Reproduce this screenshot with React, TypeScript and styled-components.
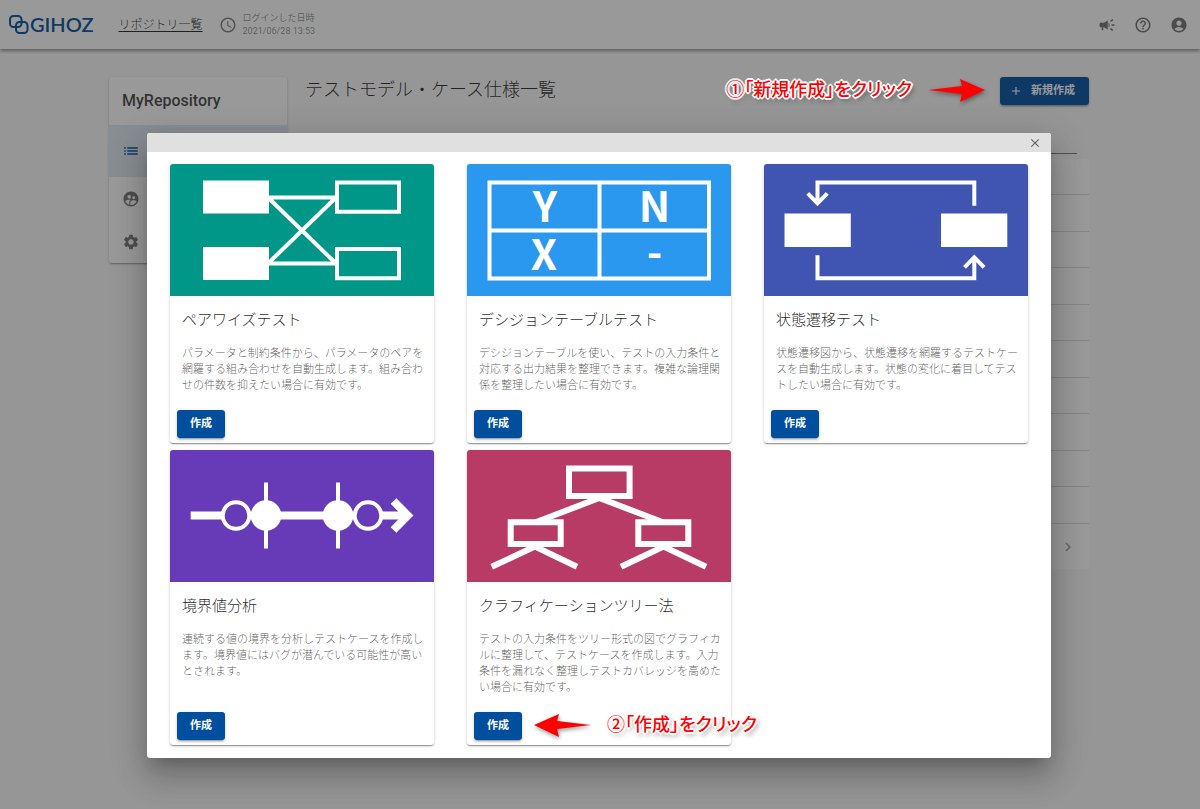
import React from "react";
import styled, { createGlobalStyle, css } from "styled-components";
import {
  MdAccessTime,
  MdAccountCircle,
  MdAdd,
  MdCampaign,
  MdChevronRight,
  MdClose,
  MdHelpOutline,
  MdList,
  MdSettings,
  MdSupervisedUserCircle,
} from "react-icons/md";

const primary = "#004f9f";
const sans = `Roboto, "Noto Sans CJK JP", sans-serif`;

const GlobalStyle = createGlobalStyle`
  *, *::before, *::after { box-sizing: border-box; }
  body { margin: 0; background: #fafafa; font-family: ${sans}; color: rgba(0, 0, 0, 0.87); }
  h1, h2, h3, p, ul { margin: 0; padding: 0; }
  ul { list-style: none; }
  button { font-family: inherit; cursor: pointer; }
`;

const Page = styled.div`
  position: relative;
  min-height: 100vh;
`;

/* ---------- header ---------- */

const Header = styled.header`
  display: flex;
  align-items: center;
  height: 49px;
  padding: 0 12px 0 9px;
  background: #fff;
  box-shadow: 0 2px 3px rgba(0, 0, 0, 0.3), 0 1px 6px rgba(0, 0, 0, 0.2);
`;

const Brand = styled.a`
  display: flex;
  align-items: center;
  gap: 1px;
  padding-bottom: 1px;
  color: ${primary};
  font: 600 20px/24px Lato, sans-serif;
  text-decoration: none;
`;

const RepoLink = styled.a`
  margin-left: 25px;
  color: rgba(0, 0, 0, 0.87);
  font-size: 12px;
  font-weight: 300;
  line-height: 16px;
  text-underline-offset: 2px;
`;

const LoginInfo = styled.div`
  display: flex;
  align-items: center;
  gap: 6px;
  margin-left: 16px;
  color: rgba(0, 0, 0, 0.5);
`;

const LoginText = styled.p`
  display: grid;
  font-size: 9px;
  line-height: 13px;
  color: rgba(0, 0, 0, 0.46);
`;

const HeaderActions = styled.nav`
  display: flex;
  gap: 18px;
  margin-left: auto;
`;

const IconButton = styled.button<{ $faint?: boolean }>`
  display: flex;
  padding: 0;
  border: 0;
  background: none;
  color: ${(p) => (p.$faint ? "rgba(0, 0, 0, 0.36)" : "rgba(0, 0, 0, 0.56)")};
`;

/* ---------- page body ---------- */

const Body = styled.div`
  display: grid;
  grid-template-columns: 178px minmax(0, 1fr);
  align-items: start;
  gap: 18px;
  padding: 28px 111px 0 109px;
`;

const Sidebar = styled.aside`
  overflow: hidden;
  border-radius: 3px;
  background: #fff;
  box-shadow: 0 2px 1px -1px rgba(0, 0, 0, 0.2), 0 1px 3px rgba(0, 0, 0, 0.24);
`;

const RepoName = styled.h2`
  padding: 0 13px;
  color: rgba(0, 0, 0, 0.76);
  font-size: 16px;
  font-weight: 500;
  line-height: 48px;
`;

const SideLink = styled.a<{ $active?: boolean }>`
  display: flex;
  align-items: center;
  height: 43px;
  padding: 0 13px;
  color: rgba(0, 0, 0, 0.54);
  ${(p) =>
    p.$active &&
    css`
      height: 52px;
      background: #dfe9f2;
      color: ${primary};
    `}
`;

const TitleRow = styled.div`
  display: flex;
  align-items: center;
  justify-content: space-between;
  height: 28px;
`;

const PageTitle = styled.h1`
  padding-bottom: 2px;
  font-size: 18px;
  font-weight: 300;
  line-height: 24px;
`;

const Anchor = styled.div`
  position: relative;
`;

const Button = styled.button`
  display: flex;
  align-items: center;
  gap: 8px;
  height: 28px;
  padding: 0 13px;
  border: 0;
  border-radius: 3px;
  background: ${primary};
  color: #fff;
  font-size: 11px;
  font-weight: 700;
  line-height: 16px;
  box-shadow: 0 3px 1px -2px rgba(0, 0, 0, 0.2), 0 2px 2px rgba(0, 0, 0, 0.14), 0 1px 4px rgba(0, 0, 0, 0.12);
`;

const NewButton = styled(Button)`
  padding: 0 14px 0 9px;
`;

const SearchField = styled.input`
  display: block;
  width: calc(100% - 24px);
  height: 25px;
  margin: 24px 12px 5px;
  padding: 0;
  border: 0;
  border-bottom: 1px solid rgba(0, 0, 0, 0.5);
  background: none;
`;

const ListPanel = styled.div`
  border-radius: 3px;
  background: #fff;
`;

const ListRow = styled.li`
  height: 36px;
  border-bottom: 1px solid rgba(0, 0, 0, 0.14);
  &:nth-child(even) {
    height: 37px;
  }
`;

const Pager = styled.div`
  display: flex;
  align-items: center;
  justify-content: flex-end;
  height: 45px;
  padding-right: 12px;
`;

/* ---------- dialog ---------- */

const Overlay = styled.div`
  position: absolute;
  inset: 0;
  z-index: 5;
  padding: 133px 149px 51px 147px;
  background: rgba(33, 33, 33, 0.46);
`;

const Dialog = styled.section`
  border-radius: 3px;
  background: #fff;
  box-shadow: 0 11px 15px -7px rgba(0, 0, 0, 0.2), 0 20px 30px 3px rgba(0, 0, 0, 0.14),
    0 8px 36px 6px rgba(0, 0, 0, 0.12);
`;

const DialogBar = styled.div`
  display: flex;
  align-items: center;
  justify-content: flex-end;
  height: 19px;
  padding-right: 9px;
  border-radius: 3px 3px 0 0;
  background: #e0e0e0;
`;

const CardGrid = styled.div`
  display: grid;
  grid-template-columns: repeat(3, minmax(0, 1fr));
  gap: 7px 33px;
  padding: 12px 23px 13px;
`;

const Card = styled.article`
  display: flex;
  flex-direction: column;
  border-radius: 3px;
  background: #fff;
  box-shadow: 0 2px 1px -1px rgba(0, 0, 0, 0.2), 0 1px 1px rgba(0, 0, 0, 0.14), 0 1px 3px rgba(0, 0, 0, 0.22);
`;

const Art = styled.svg<{ $fill: string }>`
  display: block;
  width: 100%;
  border-radius: 3px 3px 0 0;
  background: ${(p) => p.$fill};
  fill: none;
  stroke: #fff;
  stroke-width: 4px;
`;

const CardTitle = styled.h3`
  padding: 12px 12px 14px;
  font-size: 15px;
  font-weight: 300;
  line-height: 24px;
`;

const CardText = styled.p`
  padding: 0 10px 16px 12px;
  color: rgba(0, 0, 0, 0.66);
  font-size: 11px;
  font-weight: 300;
  line-height: 16px;
`;

const CardActions = styled.div`
  display: flex;
  margin-top: auto;
  padding: 0 7px 5px;
`;

/* ---------- callouts ---------- */

const Callout = styled.div<{ $side: "before" | "after" }>`
  position: absolute;
  top: 0;
  z-index: 10;
  display: flex;
  align-items: center;
  gap: 16px;
  height: 26px;
  white-space: nowrap;
  ${(p) => (p.$side === "before" ? "right: calc(100% + 15px);" : "left: calc(100% + 12px);")}
`;

const CalloutText = styled.span`
  padding-bottom: 4px;
  color: #f00;
  font-family: "Noto Sans CJK JP", sans-serif;
  font-size: 18px;
  font-weight: 500;
  font-feature-settings: "palt";
  line-height: 24px;
  text-shadow: 2px 0 #fff, -2px 0 #fff, 0 2px #fff, 0 -2px #fff, 1px 1px #fff, -1px 1px #fff, 1px -1px #fff,
    -1px -1px #fff, 2px 3px 5px rgba(0, 0, 0, 0.5);
`;

const CalloutArrow = styled.svg`
  overflow: visible;
  fill: #f00;
  filter: drop-shadow(1px 2px 2px rgba(0, 0, 0, 0.4));
`;

const RightArrow = () => (
  <CalloutArrow width="57" height="23" viewBox="0 0 57 23" aria-hidden>
    <path d="M0 11 34 7 32 0 57 11 32 23 34 15Z" />
  </CalloutArrow>
);

const LeftArrow = () => (
  <CalloutArrow width="57" height="23" viewBox="0 0 57 23" aria-hidden>
    <path d="M57 11 23 7 25 0 0 11 25 23 23 15Z" />
  </CalloutArrow>
);

/* ---------- illustrations ---------- */

const PairwiseArt = () => (
  <Art viewBox="0 0 264 132" $fill="#009688" aria-hidden>
    <path fill="#fff" stroke="none" d="M33 16.5h66v33H33zM33 83h66v33H33z" />
    <path d="M167 18.5h62v29.3h-62zM167 85h62v29.3h-62zM99 33.5h66M99 99.5h66M98 33.5l68 66M98 99.5l68-66" />
  </Art>
);

const ArtLetter = styled.text`
  fill: #fff;
  stroke: none;
  font: 700 42px "Noto Sans CJK JP", sans-serif;
  text-anchor: middle;
`;

const DecisionArt = () => (
  <Art viewBox="0 0 264 132" $fill="#2b98f0" aria-hidden>
    <path d="M22.5 18.5h219.5v96H22.5zM132.5 18v96M22 66.5h220" />
    <ArtLetter x="78" y="58">Y</ArtLetter>
    <ArtLetter x="187.5" y="58">N</ArtLetter>
    <ArtLetter x="77" y="106">X</ArtLetter>
    <ArtLetter x="187.5" y="104">-</ArtLetter>
  </Art>
);

const StateArt = () => (
  <Art viewBox="0 0 264 132" $fill="#4054b2" aria-hidden>
    <path fill="#fff" stroke="none" d="M20.5 49.5h66.3V83H20.5zM177 49.5h66.3V83H177z" />
    <path d="M210.3 41.7V18.5H53.5V39M43.7 29.3l9.8 10 9.8-10M53.5 91.3v23h156.8V94M200.5 103.3l9.8-10 9.8 10" />
  </Art>
);

const AxisStroke = styled.path`
  stroke-width: 8px;
`;

const BoundaryArt = () => (
  <Art viewBox="0 0 264 132" $fill="#673bb7" aria-hidden>
    <AxisStroke d="M20.7 65.5H52M110 65.5h45M212 65.5h26M223.5 51l14.3 14.5L223.5 80" />
    <path d="M96 32.5v66M168 32.5v66" />
    <circle cx="66" cy="65.5" r="13.3" />
    <circle cx="198" cy="65.5" r="13.3" />
    <circle cx="96" cy="65.5" r="13.3" fill="#fff" />
    <circle cx="168" cy="65.5" r="13.3" fill="#fff" />
  </Art>
);

const BranchStroke = styled.path`
  stroke-width: 6px;
`;

const TreeArt = () => (
  <Art viewBox="0 0 264 132" $fill="#b83b66" aria-hidden>
    <BranchStroke d="M102 18.5h60.6v27.6H102zM43.7 72.3h50v21.6h-50zM171.3 72.3h50v21.6h-50z" />
    <BranchStroke d="M68 72.5l64.3-24.5 64.3 24.5M24.7 116.8L68 96.5l42 20.3M154 116.8l42.6-20.3 42.4 20.3" />
  </Art>
);

const templates = [
  {
    title: "ペアワイズテスト",
    text: "パラメータと制約条件から、パラメータのペアを網羅する組み合わせを自動生成します。組み合わせの件数を抑えたい場合に有効です。",
    art: <PairwiseArt />,
  },
  {
    title: "デシジョンテーブルテスト",
    text: "デシジョンテーブルを使い、テストの入力条件と対応する出力結果を整理できます。複雑な論理関係を整理したい場合に有効です。",
    art: <DecisionArt />,
  },
  {
    title: "状態遷移テスト",
    text: "状態遷移図から、状態遷移を網羅するテストケースを自動生成します。状態の変化に着目してテストしたい場合に有効です。",
    art: <StateArt />,
  },
  {
    title: "境界値分析",
    text: "連続する値の境界を分析しテストケースを作成します。境界値にはバグが潜んでいる可能性が高いとされます。",
    art: <BoundaryArt />,
  },
  {
    title: "クラフィケーションツリー法",
    text: "テストの入力条件をツリー形式の図でグラフィカルに整理して、テストケースを作成します。入力条件を漏れなく整理しテストカバレッジを高めたい場合に有効です。",
    art: <TreeArt />,
    hint: "②「作成」をクリック",
  },
];

export default function App() {
  return (
    <Page lang="ja">
      <GlobalStyle />
      <Header>
        <Brand href="#">
          <svg width="20" height="19" viewBox="0 0 20 19" fill="none" stroke="currentColor" strokeWidth="2" aria-hidden>
            <rect x="1" y="1" width="11.5" height="11" rx="3.5" />
            <rect x="7" y="7" width="11.5" height="11" rx="3.5" />
          </svg>
          GIHOZ
        </Brand>
        <RepoLink href="#">リポジトリ一覧</RepoLink>
        <LoginInfo>
          <MdAccessTime size={18} />
          <LoginText>
            <span>ログインした日時</span>
            <time>2021/06/28 13:53</time>
          </LoginText>
        </LoginInfo>
        <HeaderActions>
          <IconButton aria-label="お知らせ"><MdCampaign size={18} /></IconButton>
          <IconButton aria-label="ヘルプ"><MdHelpOutline size={18} /></IconButton>
          <IconButton aria-label="アカウント"><MdAccountCircle size={18} /></IconButton>
        </HeaderActions>
      </Header>

      <Body>
        <Sidebar>
          <RepoName>MyRepository</RepoName>
          <SideLink href="#" $active aria-label="一覧"><MdList size={18} /></SideLink>
          <SideLink href="#" aria-label="メンバー"><MdSupervisedUserCircle size={18} /></SideLink>
          <SideLink href="#" aria-label="設定"><MdSettings size={18} /></SideLink>
        </Sidebar>
        <main>
          <TitleRow>
            <PageTitle>テストモデル・ケース仕様一覧</PageTitle>
            <Anchor>
              <NewButton><MdAdd size={14} />新規作成</NewButton>
              <Callout $side="before">
                <CalloutText>①「新規作成」をクリック</CalloutText>
                <RightArrow />
              </Callout>
            </Anchor>
          </TitleRow>
          <SearchField type="search" aria-label="検索" />
          <ListPanel>
            <ul>
              {Array.from({ length: 10 }, (_, i) => (
                <ListRow key={i} />
              ))}
            </ul>
            <Pager>
              <IconButton $faint aria-label="次のページ"><MdChevronRight size={18} /></IconButton>
            </Pager>
          </ListPanel>
        </main>
      </Body>

      <Overlay>
        <Dialog role="dialog" aria-label="新規作成">
          <DialogBar>
            <IconButton aria-label="閉じる"><MdClose size={14} /></IconButton>
          </DialogBar>
          <CardGrid>
            {templates.map((t) => (
              <Card key={t.title}>
                {t.art}
                <CardTitle>{t.title}</CardTitle>
                <CardText>{t.text}</CardText>
                <CardActions>
                  <Anchor>
                    <Button>作成</Button>
                    {t.hint && (
                      <Callout $side="after">
                        <LeftArrow />
                        <CalloutText>{t.hint}</CalloutText>
                      </Callout>
                    )}
                  </Anchor>
                </CardActions>
              </Card>
            ))}
          </CardGrid>
        </Dialog>
      </Overlay>
    </Page>
  );
}
